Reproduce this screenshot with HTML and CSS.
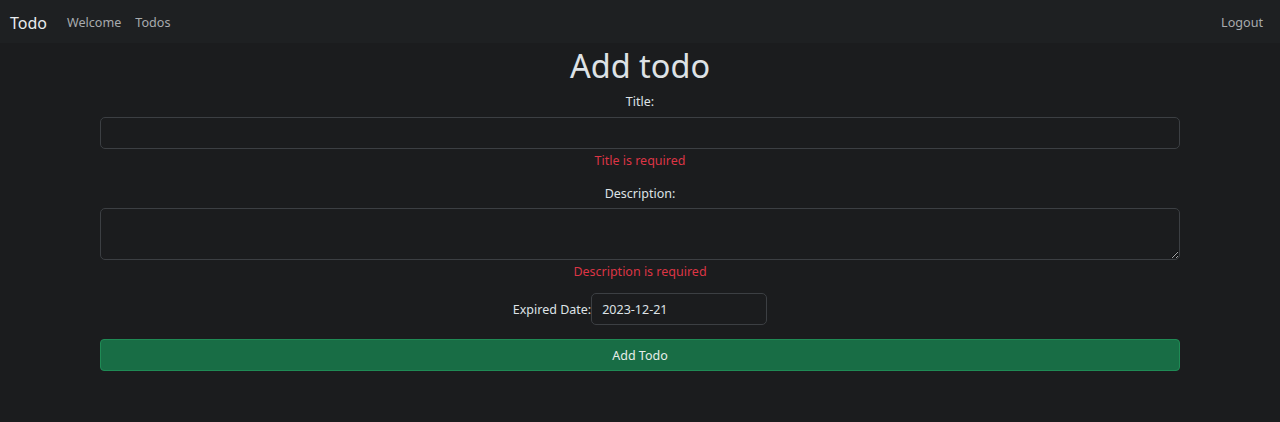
FILE: index.html
```html
<!DOCTYPE html>
<html lang="en">
<head>
<meta charset="utf-8">
<title>Add todo</title>
<link rel="stylesheet" href="styles.css">
</head>
<body>
<nav class="navbar">
  <div class="nav-left">
    <a class="brand" href="#">Todo</a>
    <a class="nav-link" href="#">Welcome</a>
    <a class="nav-link" href="#">Todos</a>
  </div>
  <a class="nav-link" href="#">Logout</a>
</nav>
<main class="container">
  <h1 class="heading">Add todo</h1>
  <form class="form">
    <label class="label" for="title">Title:</label>
    <input class="control" id="title" type="text">
    <div class="error">Title is required</div>
    <label class="label label-gap" for="desc">Description:</label>
    <textarea class="control textarea" id="desc"></textarea>
    <div class="error">Description is required</div>
    <div class="date-row">
      <label class="date-label" for="date">Expired Date:</label>
      <input class="control date" id="date" type="text" value="2023-12-21">
    </div>
    <button class="btn" type="button">Add Todo</button>
  </form>
</main>
</body>
</html>
```
FILE: styles.css
```css
* { box-sizing: border-box; }
html, body { margin: 0; padding: 0; }
body {
  background: #1b1c1e;
  color: #dee2e6;
  font-family: "Noto Sans", "Open Sans", sans-serif;
  font-size: 12.5px;
  line-height: 1.5;
}
.navbar {
  height: 43px;
  background: #1e2022;
  display: flex;
  align-items: center;
  justify-content: space-between;
  padding: 3px 17px 0 10px;
}
.nav-left { display: flex; align-items: center; gap: 14px; }
.brand {
  color: #e9ecef;
  font-size: 16px;
  text-decoration: none;
  margin-right: 6px;
}
.nav-link {
  color: #a8abae;
  text-decoration: none;
  font-size: 12.6px;
}
.container {
  width: 1080px;
  margin: 0 auto;
  text-align: center;
}
.heading {
  margin: 0;
  font-weight: 400;
  font-size: 32.5px;
  line-height: 46px;
  color: #dee2e6;
}
.form { display: flex; flex-direction: column; align-items: center; }
.label { display: block; margin-top: 2px; margin-bottom: 5px; line-height: 21px; }
.label-gap { margin-top: 12px; margin-bottom: 4px; }
.control {
  width: 100%;
  height: 32px;
  background: #1b1c1e;
  border: 1px solid #3c3f43;
  border-radius: 5px;
  color: #dee2e6;
  font-family: inherit;
  font-size: 12.5px;
  padding: 4px 10px;
  outline: none;
}
.textarea { height: 52px; resize: vertical; display: block; }
.error {
  color: #dc3545;
  margin-top: 1px;
  line-height: 21px;
}
.date-row {
  display: flex;
  align-items: center;
  margin-top: 11px;
}
.date-label { line-height: 21px; }
.date { width: 176px; }
.btn {
  margin-top: 14px;
  width: 100%;
  height: 32px;
  background: #186d45;
  border: 1px solid #1f8a55;
  border-radius: 4px;
  color: #e6ede9;
  font-family: inherit;
  font-size: 12.5px;
}
```
